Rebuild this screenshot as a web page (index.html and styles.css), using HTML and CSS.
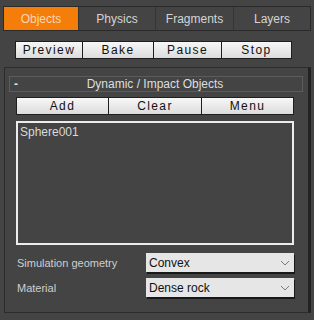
FILE: index.html
```html
<!DOCTYPE html>
<html>
<head>
    <title>Rayfire</title>
    <link rel="stylesheet" href="styles.css">
</head>
<body>
    <div class="tabs">
        <div class="tab active">Objects</div>
        <div class="tab">Physics</div>
        <div class="tab">Fragments</div>
        <div class="tab">Layers</div>
    </div>

    <div class="toolbar">
        <button class="btn">Preview</button>
        <button class="btn">Bake</button>
        <button class="btn">Pause</button>
        <button class="btn">Stop</button>
    </div>

    <div class="panel">
        <div class="group">
            <div class="rollout-header">
                <span class="collapse">-</span>
                <span class="rollout-title">Dynamic / Impact Objects</span>
            </div>

            <div class="toolbar three">
                <button class="btn">Add</button>
                <button class="btn">Clear</button>
                <button class="btn">Menu</button>
            </div>

            <div class="list">
                <div class="list-item">Sphere001</div>
            </div>

            <div class="field first">
                <label>Simulation geometry</label>
                <div class="dropdown">
                    <span>Convex</span>
                    <svg width="10" height="6" viewBox="0 0 10 6"><path d="M1 1 L5 5 L9 1" fill="none" stroke="#7a7a7a" stroke-width="1"/></svg>
                </div>
            </div>
            <div class="field">
                <label>Material</label>
                <div class="dropdown">
                    <span>Dense rock</span>
                    <svg width="10" height="6" viewBox="0 0 10 6"><path d="M1 1 L5 5 L9 1" fill="none" stroke="#7a7a7a" stroke-width="1"/></svg>
                </div>
            </div>
        </div>
    </div>
</body>
</html>
```

FILE: styles.css
```css
body {
    margin: 0;
    width: 314px;
    height: 320px;
    overflow: hidden;
    background: #444444;
    font-family: 'Liberation Sans', Arial, sans-serif;
    font-size: 12px;
    color: #dcdcdc;
}

.tabs {
    display: grid;
    grid-template-columns: 74px 77px 78px 77px;
    margin: 6px 3px 0 3px;
    border: 1px solid #2a2a2a;
    height: 23px;
}

.tab {
    display: flex;
    align-items: center;
    justify-content: center;
    border-left: 1px solid #353535;
    color: #d4d4d4;
}

.tab:first-child {
    border-left: none;
}

.tab.active {
    background: #f57d0a;
    color: #f6d7b8;
}

.toolbar {
    display: grid;
    grid-template-columns: 68px 71px 68px 70px;
    margin: 10px 0 0 15px;
    width: 277px;
}

.btn {
    height: 18px;
    padding: 0;
    border: 1px solid #1e1e1e;
    border-left: none;
    background: linear-gradient(#f7f7f7, #dcdcdc);
    color: #111;
    font-family: 'Liberation Sans', Arial, sans-serif;
    font-size: 12px;
    letter-spacing: 1.4px;
}

.btn:first-child {
    border-left: 1px solid #1e1e1e;
}

.panel {
    margin: 8px 3px 0 4px;
    height: 246px;
    border: 1px solid #2c2c2c;
    border-right: 3px solid #222;
    box-sizing: border-box;
    padding: 8px 5px 0 4px;
}

.rollout-header {
    display: flex;
    align-items: center;
    height: 16px;
    border: 1px solid #5c5c5c;
    box-sizing: border-box;
    padding: 0 4px;
    font-size: 12px;
    color: #dedede;
}

.collapse {
    width: 8px;
    font-weight: bold;
}

.rollout-title {
    flex: 1;
    text-align: center;
    margin-right: 10px;
}

.toolbar.three {
    grid-template-columns: 93px 93px 92px;
    margin: 5px 0 0 7px;
    width: 278px;
}

.list {
    margin: 6px 0 0 7px;
    width: 278px;
    height: 124px;
    border: 2px solid #ececec;
    box-sizing: border-box;
    padding: 2px 2px;
    color: #dadada;
}

.field {
    display: flex;
    align-items: center;
    margin: 6px 0 0 8px;
    width: 277px;
    height: 19px;
}

.field.first {
    margin-top: 8px;
}

.field label {
    width: 129px;
    font-size: 11px;
    color: #cfcfcf;
}

.dropdown {
    flex: 1;
    display: flex;
    align-items: center;
    justify-content: space-between;
    height: 19px;
    box-sizing: border-box;
    padding: 0 4px 0 3px;
    background: #e6e6e6;
    color: #111;
    box-shadow: 1px 2px 0 #181818;
}
```
